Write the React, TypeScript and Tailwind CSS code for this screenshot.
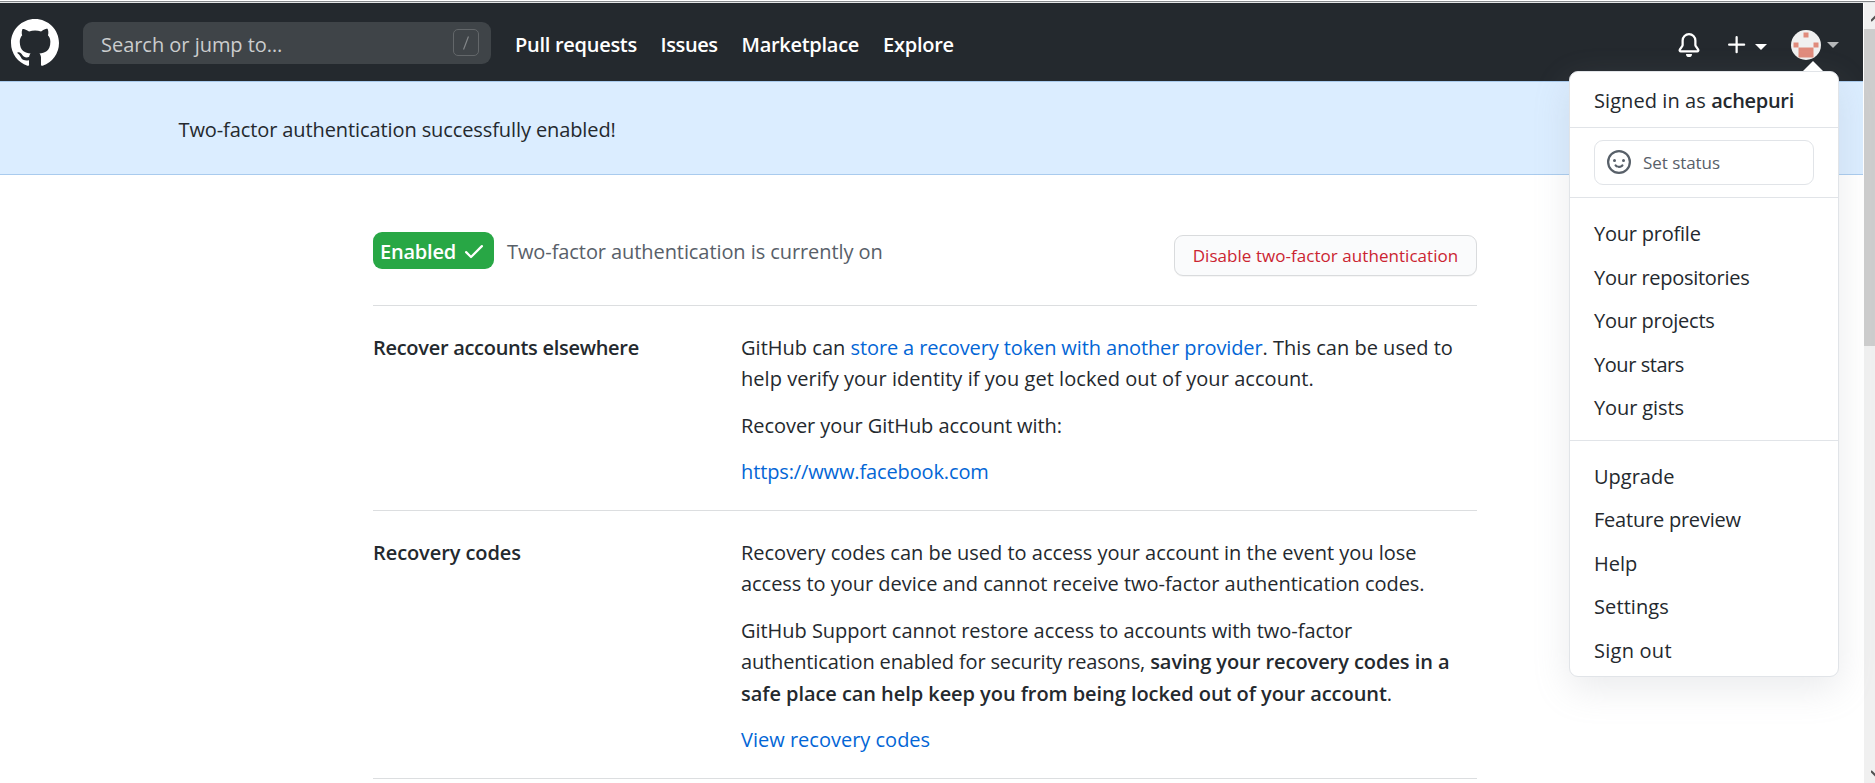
import type { ReactNode } from "react";

const accountLinks = [
  { label: "Your profile", tracking: "tracking-[-0.22px]" },
  { label: "Your repositories", tracking: "tracking-[-0.28px]" },
  { label: "Your projects", tracking: "tracking-[-0.25px]" },
  { label: "Your stars", tracking: "tracking-[-0.44px]" },
  { label: "Your gists", tracking: "tracking-[-0.1px]" },
];

const siteLinks = [
  { label: "Upgrade", tracking: "tracking-normal" },
  { label: "Feature preview", tracking: "tracking-[-0.22px]" },
  { label: "Help", tracking: "tracking-normal" },
  { label: "Settings", tracking: "tracking-[0.1px]" },
  { label: "Sign out", tracking: "tracking-[0.25px]" },
];

function GitHubMark() {
  return (
    <svg viewBox="0 0 16 16" className="size-12 fill-white">
      <path
        fillRule="evenodd"
        d="M8 0C3.58 0 0 3.58 0 8c0 3.54 2.29 6.53 5.47 7.59.4.07.55-.17.55-.38 0-.19-.01-.82-.01-1.49-2.01.37-2.53-.49-2.69-.94-.09-.23-.48-.94-.82-1.13-.28-.15-.68-.52-.01-.53.63-.01 1.08.58 1.23.82.72 1.21 1.87.87 2.33.66.07-.52.28-.87.51-1.07-1.78-.2-3.64-.89-3.64-3.95 0-.87.31-1.59.82-2.15-.08-.2-.36-1.02.08-2.12 0 0 .67-.21 2.2.82.64-.18 1.32-.27 2-.27.68 0 1.36.09 2 .27 1.53-1.04 2.2-.82 2.2-.82.44 1.1.16 1.92.08 2.12.51.56.82 1.27.82 2.15 0 3.07-1.87 3.75-3.65 3.95.29.25.54.73.54 1.48 0 1.07-.01 1.93-.01 2.2 0 .21.15.46.55.38A8.013 8.013 0 0016 8c0-4.42-3.58-8-8-8z"
      />
    </svg>
  );
}

function BellIcon() {
  return (
    <svg viewBox="0 0 16 16" className="size-6 fill-white">
      <path d="M8 16a2 2 0 001.985-1.75c.017-.137-.097-.25-.235-.25h-3.5c-.138 0-.252.113-.235.25A2 2 0 008 16z" />
      <path
        fillRule="evenodd"
        d="M8 1.5A3.5 3.5 0 004.5 5v2.947c0 .346-.102.683-.294.97l-1.703 2.556a.018.018 0 00-.003.01l.001.006c0 .002.002.004.004.006a.017.017 0 00.006.004l.007.001h10.964l.007-.001a.016.016 0 00.006-.004.016.016 0 00.004-.006l.001-.007a.017.017 0 00-.003-.01l-1.703-2.554a1.75 1.75 0 01-.294-.97V5A3.5 3.5 0 008 1.5zM3 5a5 5 0 0110 0v2.947c0 .05.015.098.042.139l1.703 2.555A1.518 1.518 0 0113.482 13H2.518a1.518 1.518 0 01-1.263-2.36l1.703-2.554A.25.25 0 003 7.947V5z"
      />
    </svg>
  );
}

function PlusIcon() {
  return (
    <svg viewBox="0 0 16 16" className="size-6 fill-white">
      <path d="M7.75 2a.75.75 0 01.75.75V7h4.25a.75.75 0 110 1.5H8.5v4.25a.75.75 0 11-1.5 0V8.5H2.75a.75.75 0 010-1.5H7V2.75A.75.75 0 017.75 2z" />
    </svg>
  );
}

function Caret({ className }: { className: string }) {
  return (
    <svg viewBox="0 0 12 6" className={`h-1.5 w-3 ${className}`}>
      <path d="M0 0h12L6 6z" />
    </svg>
  );
}

function Avatar() {
  return (
    <svg viewBox="0 0 30 30" className="size-[30px] rounded-full bg-[#f0f0f0] fill-[#e08b7c]">
      <rect x="12.5" y="2.5" width="5" height="5" />
      <rect x="2.5" y="12.5" width="5" height="5" />
      <rect x="22.5" y="12.5" width="5" height="5" />
      <rect x="7.5" y="17.5" width="15" height="10" />
    </svg>
  );
}

function SmileyIcon() {
  return (
    <svg viewBox="0 0 16 16" className="size-6 fill-[#586069]">
      <path
        fillRule="evenodd"
        d="M1.5 8a6.5 6.5 0 1113 0 6.5 6.5 0 01-13 0zM8 0a8 8 0 100 16A8 8 0 008 0zM5 8a1 1 0 100-2 1 1 0 000 2zm7-1a1 1 0 11-2 0 1 1 0 012 0zM5.32 9.636a.75.75 0 011.038.175l.007.009c.103.118.22.222.35.31.264.178.683.37 1.285.37.602 0 1.02-.192 1.285-.371.13-.088.247-.192.35-.31l.007-.008a.75.75 0 111.222.87l-.614-.431c.614.43.614.431.613.431v.001l-.001.002-.002.003-.005.007-.014.019a1.984 1.984 0 01-.184.213c-.16.166-.338.316-.53.445-.63.418-1.37.638-2.127.629-.946 0-1.652-.308-2.126-.63a3.32 3.32 0 01-.715-.657l-.014-.02-.005-.006-.002-.003v-.002h-.001l.613-.432-.614.43a.75.75 0 01.183-1.044h.001z"
      />
    </svg>
  );
}

function CheckIcon() {
  return (
    <svg viewBox="0 0 16 16" className="size-6 fill-white">
      <path d="M13.78 4.22a.75.75 0 010 1.06l-7.25 7.25a.75.75 0 01-1.06 0L2.22 9.28a.75.75 0 011.06-1.06L6 10.94l6.72-6.72a.75.75 0 011.06 0z" />
    </svg>
  );
}

function Header() {
  return (
    <header className="flex h-[78px] items-center bg-[#24292e] pl-[11px] text-white">
      <div className="pt-0.5">
        <GitHubMark />
      </div>
      <div className="mt-0.5 ml-6 flex h-[42px] w-[408px] items-center justify-between rounded-[9px] bg-[#3f4448] pr-3 pl-[18px]">
        <span className="pt-[3px] leading-6 tracking-[-0.03px] text-[#cbcdce]">Search or jump to…</span>
        <span className="mb-px flex h-[27px] w-[26px] items-center justify-center rounded-[5px] border border-[#63676a]">
          <svg viewBox="0 0 6 14" className="h-3.5 w-1.5 fill-none stroke-[#85888b] stroke-[1.2]">
            <path d="M5.5 0.5L0.5 13.5" />
          </svg>
        </span>
      </div>
      <nav className="ml-6 flex gap-6 pt-1.5 leading-6 font-semibold whitespace-nowrap">
        <a className="w-[121.5px] tracking-[-0.28px]">Pull requests</a>
        <a className="w-[57px] tracking-[-0.4px]">Issues</a>
        <a className="w-[117.5px] tracking-[-0.28px]">Marketplace</a>
        <a className="tracking-[-0.25px]">Explore</a>
      </nav>
      <div className="ml-auto flex items-center pt-1.5 pr-6">
        <BellIcon />
        <span className="ml-6 flex items-center gap-1.5">
          <PlusIcon />
          <span className="pt-1">
            <Caret className="fill-white" />
          </span>
        </span>
        <span className="ml-6 flex items-center gap-1.5">
          <Avatar />
          <Caret className="fill-[#b6b8ba]" />
        </span>
      </div>
    </header>
  );
}

function MenuSection({ items, className }: { items: { label: string; tracking: string }[]; className: string }) {
  return (
    <ul className={className}>
      {items.map((item) => (
        <li key={item.label} className={`pt-[7px] pb-[5px] pl-6 ${item.tracking}`}>
          {item.label}
        </li>
      ))}
    </ul>
  );
}

function UserMenu() {
  return (
    <div className="absolute top-[71px] left-[1569px] h-[606px] w-[270px] rounded-[9px] border border-[#e1e4e8] bg-white shadow-[0_12px_36px_rgba(149,157,165,0.2)]">
      <svg viewBox="0 0 20 10" className="absolute -top-[11px] left-[233px] h-2.5 w-5 fill-white">
        <path d="M10 0l10 10H0z" />
      </svg>
      <div className="h-[55px] pt-[13px] pl-6 tracking-[0.08px]">
        Signed in as <strong className="font-semibold tracking-[-0.3px]">achepuri</strong>
      </div>
      <div className="h-[71px] border-y border-[#e1e4e8] px-6 pt-3">
        <div className="flex h-[45px] items-center rounded-[9px] border border-[#e1e4e8] pb-px pl-3 text-[#586069]">
          <SmileyIcon />
          <span className="ml-3 pt-0.5 text-[17px] leading-6 tracking-[-0.05px]">Set status</span>
        </div>
      </div>
      <MenuSection items={accountLinks} className="h-[243px] border-b border-[#e1e4e8] pt-[13px]" />
      <MenuSection items={siteLinks} className="pt-[12.5px]" />
    </div>
  );
}

function Row({ title, titleTracking, children }: { title: string; titleTracking: string; children: ReactNode }) {
  return (
    <section className="flex border-t border-[#dcdee0] pt-[25.5px] pb-[22.5px]">
      <h3 className={`w-[368px] shrink-0 font-semibold ${titleTracking}`}>{title}</h3>
      <div className="flex flex-col gap-[15px] whitespace-nowrap">{children}</div>
    </section>
  );
}

function Link({ children, className }: { children: ReactNode; className: string }) {
  return <a className={`text-[#0366d6] ${className}`}>{children}</a>;
}

export default function App() {
  return (
    <div className="relative flex h-[783px] w-[1875px] flex-col overflow-hidden bg-white font-['Open_Sans','Noto_Sans',sans-serif] text-[20px] leading-[31.5px] text-[#24292e]">
      <div className="h-[3px] border-t border-b border-t-white border-b-[#e4e6e7] bg-[#85888b]" />
      <div className="flex min-h-0 flex-1">
        <div className="w-[1863px] shrink-0">
          <Header />
          <div className="h-[94px] border-y border-[#a9cbee] bg-[#dbedff] pt-8 pl-[178.5px] tracking-[-0.1px]">
            Two-factor authentication successfully enabled!
          </div>
          <main className="ml-[373px] w-[1104px]">
            <div className="flex h-[130px] items-start pt-[57px]">
              <span className="flex h-[37px] w-[121px] items-center rounded-[9px] bg-[#28a745] pl-[7px] font-semibold tracking-[-0.2px] text-white">
                <span className="w-[82px] pt-0.5">Enabled</span>
                <CheckIcon />
              </span>
              <span className="pt-1 pl-[13px] tracking-[-0.08px] text-[#586069]">
                Two-factor authentication is currently on
              </span>
              <button className="mt-[3px] ml-auto h-[41px] w-[303px] rounded-[9px] border border-[#d9dbdd] bg-[#fafbfc] pt-px text-[17px] tracking-[0.05px] text-[#cb2431] shadow-[0_1px_0_rgba(27,31,35,0.04)]">
                Disable two-factor authentication
              </button>
            </div>
            <Row title="Recover accounts elsewhere" titleTracking="tracking-[-0.29px]">
              <p>
                <span className="tracking-[0.02px]">GitHub can </span>
                <Link className="tracking-[-0.12px]">store a recovery token with another provider</Link>
                <span className="tracking-[0.02px]">. This can be used to</span>
                <br />
                <span className="tracking-[0.05px]">
                  help verify your identity if you get locked out of your account.
                </span>
              </p>
              <p className="tracking-[-0.06px]">Recover your GitHub account with:</p>
              <p>
                <Link className="tracking-[-0.13px]">https://www.facebook.com</Link>
              </p>
            </Row>
            <Row title="Recovery codes" titleTracking="tracking-[-0.08px]">
              <p>
                <span className="tracking-[-0.015px]">
                  Recovery codes can be used to access your account in the event you lose
                </span>
                <br />
                <span className="tracking-[-0.035px]">
                  access to your device and cannot receive two-factor authentication codes.
                </span>
              </p>
              <p>
                <span className="tracking-[-0.035px]">
                  GitHub Support cannot restore access to accounts with two-factor
                </span>
                <br />
                <span className="tracking-[-0.15px]">authentication enabled for security reasons, </span>
                <strong className="font-semibold tracking-[-0.06px]">saving your recovery codes in a</strong>
                <br />
                <strong className="font-semibold tracking-[-0.06px]">
                  safe place can help keep you from being locked out of your account
                </strong>
                .
              </p>
              <p>
                <Link className="tracking-normal">View recovery codes</Link>
              </p>
            </Row>
            <div className="border-t border-[#dcdee0]" />
          </main>
        </div>
        <div className="ml-px flex w-[11px] flex-col bg-[#f0f0f0]">
          <div className="flex h-[26px] items-start justify-end overflow-hidden pt-[11px]">
            <svg viewBox="0 0 4 8" className="h-2 w-1 fill-none stroke-[#505050] stroke-2">
              <path d="M0 7L6 1" />
            </svg>
          </div>
          <div className="h-[317px] bg-[#cdcdcd]" />
          <div className="mt-auto flex justify-end pb-[5px]">
            <svg viewBox="0 0 4 8" className="h-2 w-1 fill-none stroke-[#505050] stroke-2">
              <path d="M0 1L6 7" />
            </svg>
          </div>
        </div>
      </div>
      <UserMenu />
    </div>
  );
}
